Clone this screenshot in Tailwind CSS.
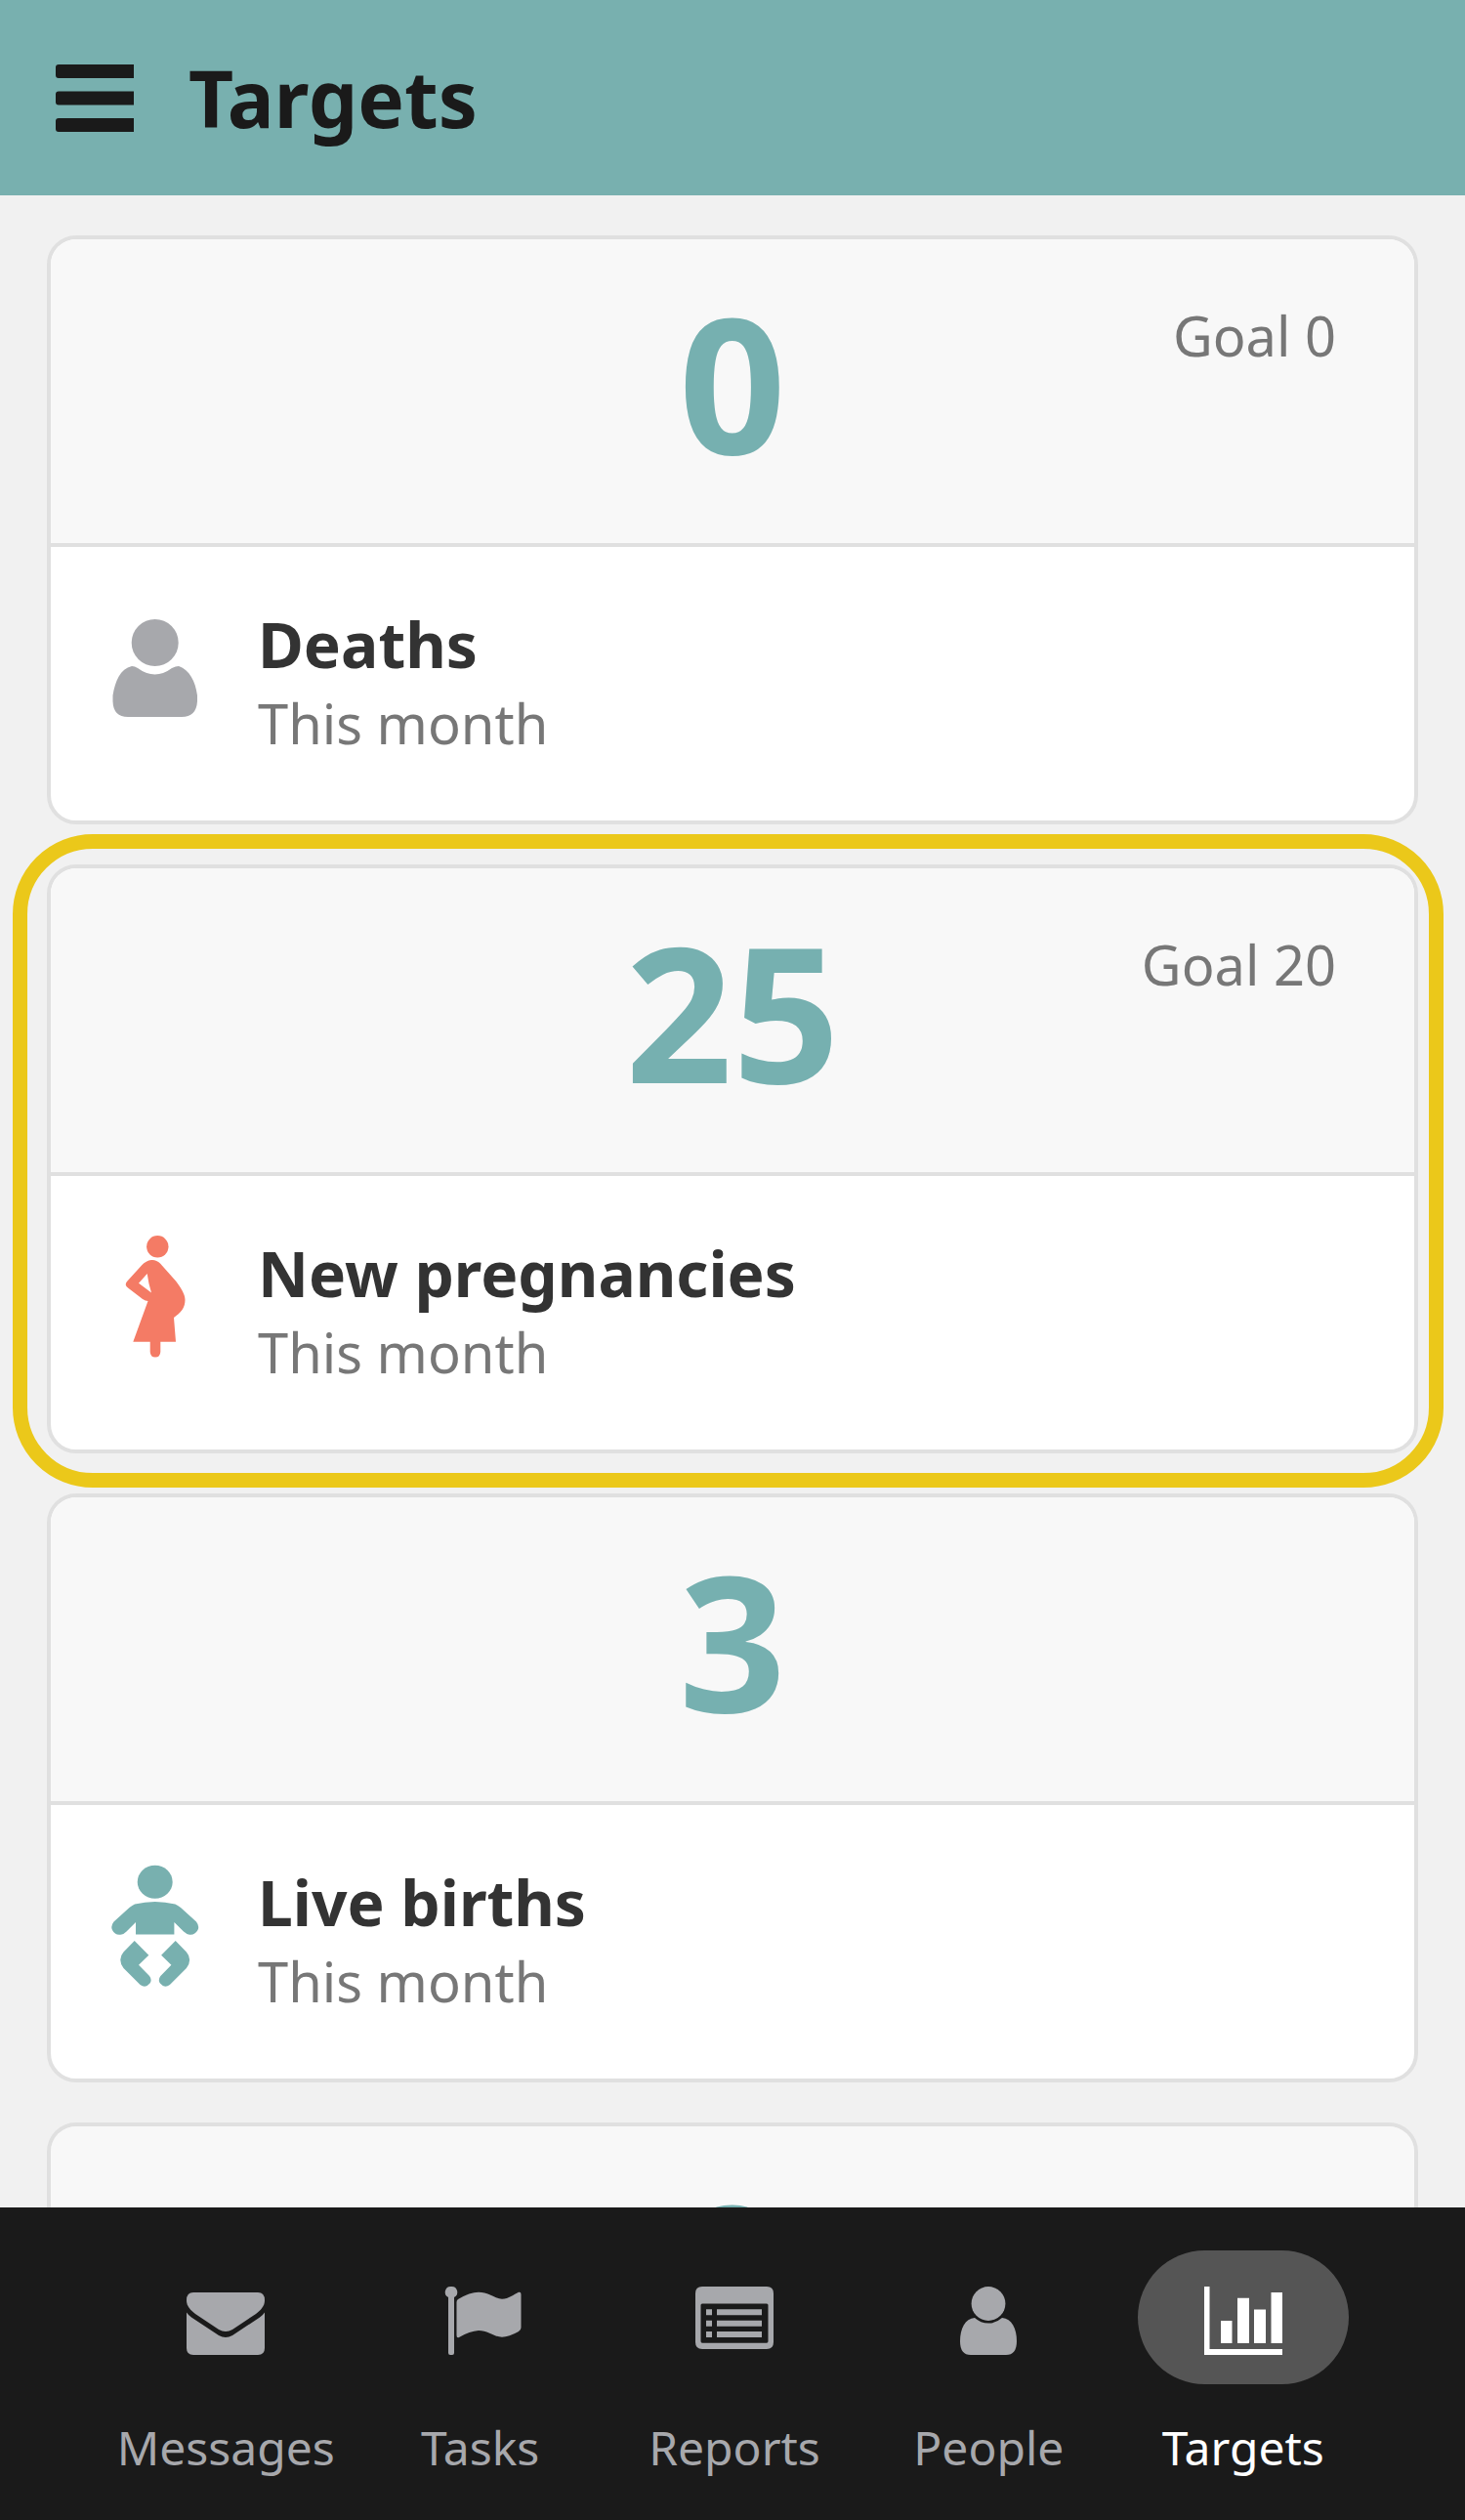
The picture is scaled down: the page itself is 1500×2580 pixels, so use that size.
<!DOCTYPE html>
<html lang="en">
<head>
  <meta charset="UTF-8">
  <meta name="viewport" content="width=device-width, initial-scale=1.0">
  <title>Targets</title>
  <script src="https://cdn.jsdelivr.net/npm/@tailwindcss/browser@4"></script>
</head>
<body class="flex h-screen flex-col overflow-hidden bg-[#f1f1f1] font-['Noto_Sans',sans-serif]">

  <!-- Header -->
  <header class="flex h-[200px] shrink-0 items-center gap-14 bg-[#78b0af] px-14 text-[#1a1a1a]">
    <button type="button" aria-label="Menu">
      <svg class="block h-[70px] w-[81px]" viewBox="0 0 81 70" fill="currentColor">
        <path d="M4 1H81V15H4Q1 15 1 12V4Q1 1 4 1ZM4 28.500H81V42.500H4Q1 42.500 1 39.500V31.500Q1 28.500 4 28.500ZM4 56H81V70H4Q1 70 1 67V59Q1 56 4 56Z"/>
      </svg>
    </button>
    <h1 class="text-[80px] leading-[100px] font-bold">Targets</h1>
  </header>

  <!-- Target cards -->
  <main class="min-h-0 flex-1 overflow-hidden px-12 pt-[41px]">
    <ul class="flex flex-col gap-[41px]">

      <li class="overflow-hidden rounded-[30px] border-4 border-[#e0e0e0] bg-white">
        <div class="grid grid-cols-3 border-b-4 border-[#e0e0e0] bg-[#f8f8f8] px-20 pt-[50px] pb-[69px]">
          <p class="col-start-2 text-center text-[192px] leading-[192px] font-bold text-[#76b0b0]">0</p>
          <p class="pt-2 text-right text-[56px] leading-[80px] text-[#777]">Goal 0</p>
        </div>
        <div class="flex gap-15 py-15 pl-[62px]">
          <svg class="h-[126px] w-[90px]" viewBox="0 0 90 126" fill="#a7a8ac">
            <circle cx="44.700" cy="38" r="24"/>
            <path d="M21 62Q24 62 27 64Q44.700 77 62 64Q66 62 69 62C80 66 86 77 88 92V98Q87 114 72 114H17Q2 114 1.500 98V92C4 77 9 65 21 62Z"/>
          </svg>
          <div>
            <h2 class="text-[64px] leading-[80px] font-bold text-[#333]">Deaths</h2>
            <p class="text-[56px] leading-[80px] text-[#777]">This month</p>
          </div>
        </div>
      </li>

      <li class="relative">
        <div class="overflow-hidden rounded-[30px] border-4 border-[#e0e0e0] bg-white">
          <div class="grid grid-cols-3 border-b-4 border-[#e0e0e0] bg-[#f8f8f8] px-20 pt-[50px] pb-[69px]">
            <p class="col-start-2 text-center text-[192px] leading-[192px] font-bold text-[#76b0b0]">25</p>
            <p class="pt-2 text-right text-[56px] leading-[80px] text-[#777]">Goal 20</p>
          </div>
          <div class="flex gap-15 py-15 pl-[62px]">
            <svg class="h-[126px] w-[90px]" viewBox="0 0 90 126" fill="#f47b65">
              <circle cx="47.300" cy="12.300" r="11.200"/>
              <path fill-rule="evenodd" d="M41 26Q46 25.500 50 29.500L66 47.500C71 54 75.500 61 75.500 67C75.500 75 71 80 64 85L66 109.700H50.300V120Q50 125.500 45 125.500Q40 125.500 39.700 120V109.700H22.300L37.500 68Q35 68 32 66L17 54.500Q13 51.500 16 48L31 31.500Q35.500 26.500 41 26ZM36.700 40L28 49.700L41 59.500Q38 50 36.700 40Z"/>
            </svg>
            <div>
              <h2 class="text-[64px] leading-[80px] font-bold text-[#333]">New pregnancies</h2>
              <p class="text-[56px] leading-[80px] text-[#777]">This month</p>
            </div>
          </div>
        </div>
        <!-- Highlight ring -->
        <div class="pointer-events-none absolute -top-[31px] -right-[26px] -bottom-[35px] -left-[35px] rounded-[82px] border-[15px] border-[#ebc81a]"></div>
      </li>

      <li class="overflow-hidden rounded-[30px] border-4 border-[#e0e0e0] bg-white">
        <div class="grid grid-cols-3 border-b-4 border-[#e0e0e0] bg-[#f8f8f8] px-20 pt-[50px] pb-[69px]">
          <p class="col-start-2 text-center text-[192px] leading-[192px] font-bold text-[#76b0b0]">3</p>
        </div>
        <div class="flex gap-15 py-15 pl-[62px]">
          <svg class="h-[126px] w-[90px]" viewBox="0 0 90 126" fill="#78b0af">
            <ellipse cx="44.700" cy="18.700" rx="18" ry="17"/>
            <path d="M24 41.500Q44.700 36.500 65.400 41.500Q68 42.500 71 45L87 59.500Q90.500 64 88.500 68Q85 74 79 72.500Q77 72 74 69.500L64.400 60V72.500H25V60L15.500 69.500Q13 72 10.500 72.500Q4 74 1 68Q-1 64 2.500 59.500L18.500 45Q21.500 42.500 24 41.500Z"/>
            <path d="M23.700 79L38.300 93.700L28 103.700L39 115Q42 119 39.500 122.500Q35 128 29.500 124L12.500 107Q6 98 12.500 90.500Z"/>
            <path d="M65.700 79L51.100 93.700L61.400 103.700L50.400 115Q47.400 119 49.900 122.500Q54.400 128 59.900 124L76.900 107Q83.400 98 76.900 90.500Z"/>
          </svg>
          <div>
            <h2 class="text-[64px] leading-[80px] font-bold text-[#333]">Live births</h2>
            <p class="text-[56px] leading-[80px] text-[#777]">This month</p>
          </div>
        </div>
      </li>

      <li class="overflow-hidden rounded-[30px] border-4 border-[#e0e0e0] bg-white">
        <div class="grid grid-cols-3 border-b-4 border-[#e0e0e0] bg-[#f8f8f8] px-20 pt-[50px] pb-[69px]">
          <p class="col-start-2 text-center text-[192px] leading-[192px] font-bold text-[#76b0b0]">0</p>
        </div>
      </li>

    </ul>
  </main>

  <!-- Bottom tabs -->
  <nav class="grid h-[320px] shrink-0 grid-cols-5 bg-[#1a1a1a] pt-11 pr-[97px] pl-[101px] text-[48px] leading-[66px] text-[#a7a8ac]">
    <a href="#messages" class="flex flex-col items-center gap-8">
      <span class="flex h-[137px] w-[216px] justify-center rounded-full pt-[37px]">
        <svg class="h-[70px] w-[80px] overflow-visible" viewBox="0 0 80 70" fill="currentColor">
          <path d="M7 6H73Q80 6 80 14C80 20 76 24 71 28L47 44Q40 48 33 44L9 28C4 24 0 20 0 14Q0 6 7 6Z"/>
          <path d="M0 26.500Q2 29.500 5 31.500L33 50Q40 54 47 50L75 31.500Q78 29.500 80 26.500V63Q80 70 73 70H7Q0 70 0 63Z"/>
        </svg>
      </span>
      Messages
    </a>
    <a href="#tasks" class="flex flex-col items-center gap-8">
      <span class="flex h-[137px] w-[216px] justify-center rounded-full pt-[37px]">
        <svg class="h-[70px] w-[80px] overflow-visible" viewBox="0 0 80 70" fill="currentColor">
          <path d="M10 0A5.800 5.800 0 0 1 13 11V68Q13 70 11 70H9Q7 70 7 68V11A5.800 5.800 0 0 1 10 0Z"/>
          <path d="M17 13Q29 5.700 38 5.700C49 5.700 55 12.700 62 12.700C69 12.700 74 8 79 5.800Q81.500 5 81.500 8V42Q81.500 44.500 79 46Q69 51.700 62 51.700C54 51.700 48 45 38 45Q29 45.500 18 52Q15.500 53 15.500 50V16Q15.500 14 17 13Z"/>
        </svg>
      </span>
      Tasks
    </a>
    <a href="#reports" class="flex flex-col items-center gap-8">
      <span class="flex h-[137px] w-[216px] justify-center rounded-full pt-[37px]">
        <svg class="h-[70px] w-[80px]" viewBox="0 0 80 70" fill="currentColor">
          <path fill-rule="evenodd" d="M7 0H73Q80 0 80 7V57Q80 64 73 64H7Q0 64 0 57V7Q0 0 7 0ZM7 17.500Q5.500 17.500 5.500 19V56Q5.500 57.700 7 57.700H73Q74.500 57.700 74.500 56V19Q74.500 17.500 73 17.500Z"/>
          <path d="M11 23.300H17V29.300H11ZM11 34.700H17V40.700H11ZM11 46H17V52H11ZM22 23.300H68V29.300H22ZM22 34.700H68V40.700H22ZM22 46H68V52H22Z"/>
        </svg>
      </span>
      Reports
    </a>
    <a href="#people" class="flex flex-col items-center gap-8">
      <span class="flex h-[137px] w-[216px] justify-center rounded-full pt-[37px]">
        <svg class="h-[70px] w-[80px]" viewBox="0 0 80 70" fill="currentColor">
          <circle cx="40" cy="17.500" r="17.400"/>
          <path d="M26 32Q32 37.500 40 37.500Q48 37.500 54 32C64 33 69 43 69 56Q69 70 58 70H22Q11 70 11 56C11 43 16 33 26 32Z"/>
        </svg>
      </span>
      People
    </a>
    <a href="#targets" aria-current="page" class="flex flex-col items-center gap-8 text-white">
      <span class="flex h-[137px] w-[216px] justify-center rounded-full bg-[#555] pt-[37px]">
        <svg class="h-[70px] w-[80px]" viewBox="0 0 80 70" fill="currentColor">
          <path d="M0 0H5.500V64H80V70H0ZM17 35H28.500V58H17ZM34 11.700H46V58H34ZM51 23.500H63V58H51ZM68.500 6H80V58H68.500Z"/>
        </svg>
      </span>
      Targets
    </a>
  </nav>

</body>
</html>
